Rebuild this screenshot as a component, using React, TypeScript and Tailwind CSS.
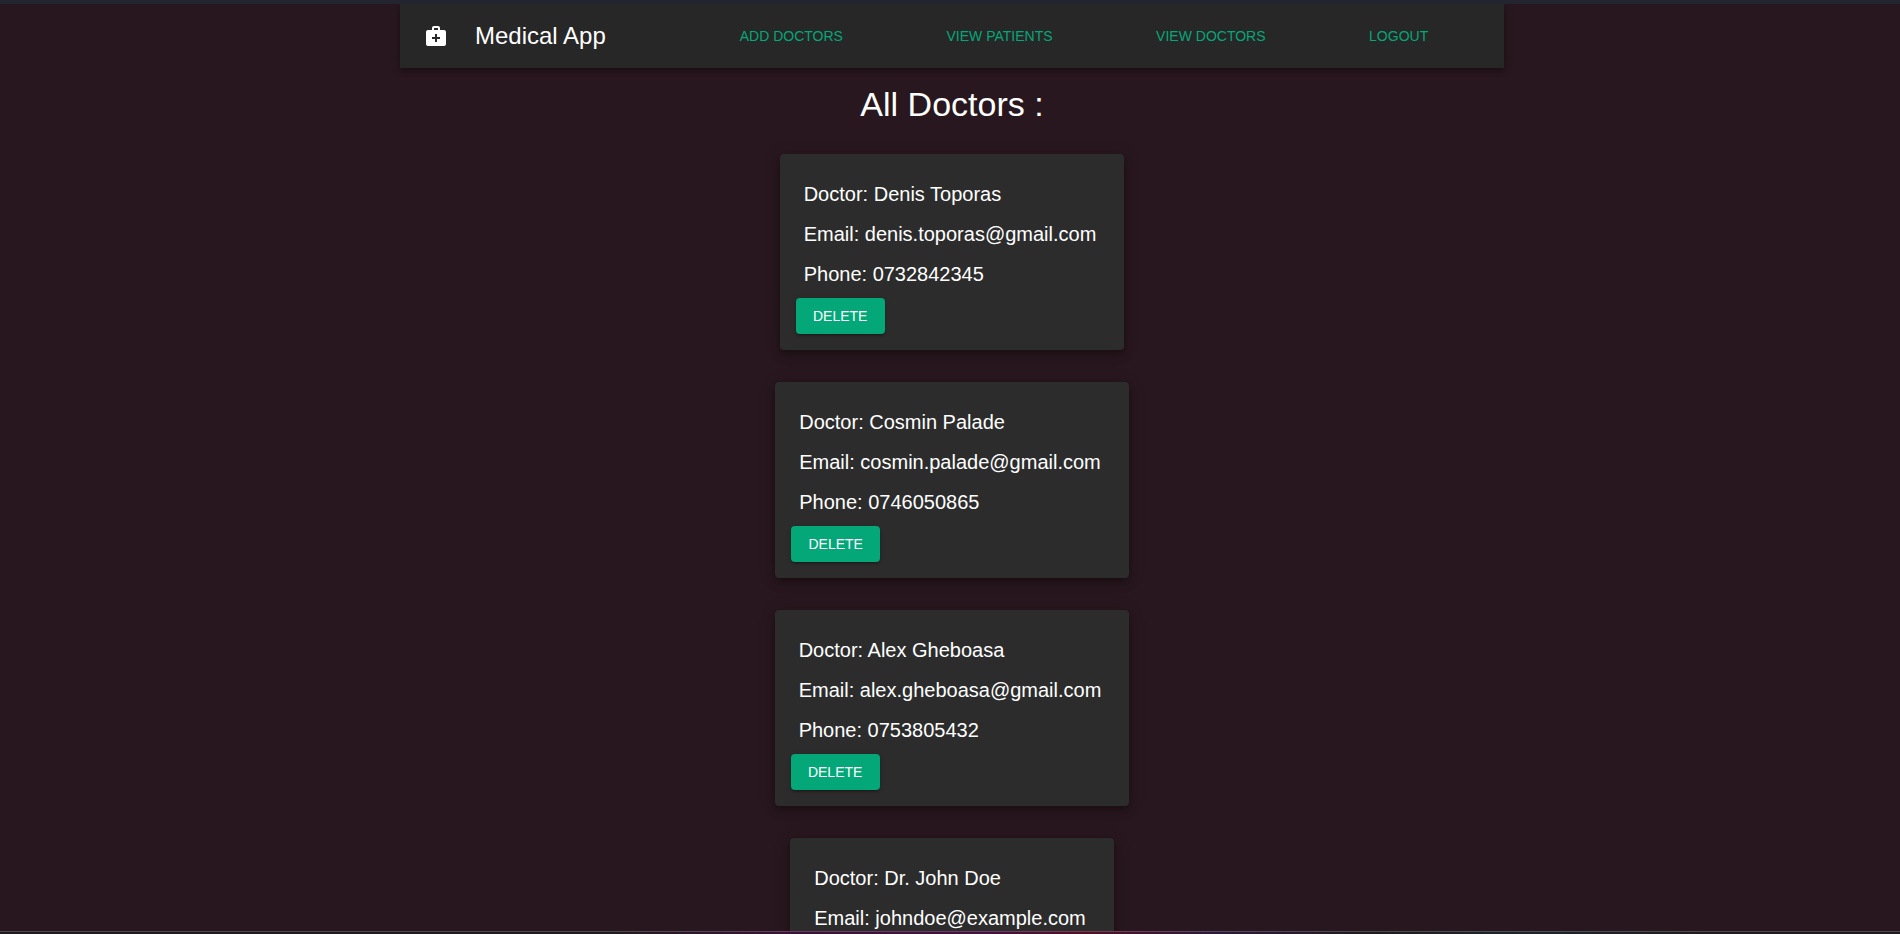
import { MdMedicalServices } from "react-icons/md";

type Doctor = { name: string; email: string; phone: string };

const links = ["Add Doctors", "View Patients", "View Doctors", "Logout"];

const doctors: Doctor[] = [
  { name: "Denis Toporas", email: "denis.toporas@gmail.com", phone: "0732842345" },
  { name: "Cosmin Palade", email: "cosmin.palade@gmail.com", phone: "0746050865" },
  { name: "Alex Gheboasa", email: "alex.gheboasa@gmail.com", phone: "0753805432" },
  { name: "Dr. John Doe", email: "johndoe@example.com", phone: "0712345678" },
];

function NavBar() {
  return (
    <header className="flex h-16 items-center bg-[#272727] px-6 shadow-[0_2px_4px_-1px_rgba(0,0,0,0.2),0_4px_5px_0_rgba(0,0,0,0.14),0_1px_10px_0_rgba(0,0,0,0.12)]">
      <MdMedicalServices className="size-6 shrink-0" aria-hidden="true" />
      <span className="ml-[27px] w-[213px] text-2xl">Medical App</span>
      <nav className="flex flex-1 items-center justify-around">
        {links.map((label) => (
          <a key={label} href="#" className="px-2.5 py-1.5 text-sm uppercase text-[#04a777]">
            {label}
          </a>
        ))}
      </nav>
    </header>
  );
}

function DoctorCard({ doctor }: { doctor: Doctor }) {
  return (
    <li className="rounded bg-[#2c2c2c] p-4 shadow-[0_3px_5px_-1px_rgba(0,0,0,0.2),0_6px_10px_0_rgba(0,0,0,0.14),0_1px_18px_0_rgba(0,0,0,0.12)]">
      <div className="flex flex-col gap-2 py-2 pl-2 pr-3 text-xl leading-8">
        <p>Doctor: {doctor.name}</p>
        <p>Email: {doctor.email}</p>
        <p>Phone: {doctor.phone}</p>
      </div>
      <button
        type="button"
        className="h-9 w-[89px] rounded bg-[#04a777] text-sm uppercase shadow-[0_3px_1px_-2px_rgba(0,0,0,0.2),0_2px_2px_0_rgba(0,0,0,0.14),0_1px_5px_0_rgba(0,0,0,0.12)]"
      >
        Delete
      </button>
    </li>
  );
}

export default function App() {
  return (
    <div className="flex h-screen flex-col overflow-hidden bg-[#28171e] font-['Liberation_Sans',Arial,sans-serif] text-white">
      <div className="h-1 shrink-0 bg-[#22252d]" />
      <div className="min-h-0 flex-1 overflow-y-auto pl-1 [scrollbar-width:none]">
        <div className="mx-auto max-w-[1104px]">
          <NavBar />
          <main className="flex flex-col items-center pb-8">
            <h1 className="mt-4 text-[34px] leading-10">All Doctors :</h1>
            <ul className="mt-[30px] flex flex-col items-center gap-8">
              {doctors.map((doctor) => (
                <DoctorCard key={doctor.email} doctor={doctor} />
              ))}
            </ul>
          </main>
        </div>
      </div>
      <div className="h-[3px] shrink-0 border-t border-white/20 bg-[linear-gradient(90deg,#1e1b1e_0%,#1e1b1e_32%,#3a1236_42%,#42123c_52%,#501026_57%,#2a1a38_64%,#1e1b1e_72%,#1e242c_80%,#1e1b1e_90%)]" />
    </div>
  );
}
